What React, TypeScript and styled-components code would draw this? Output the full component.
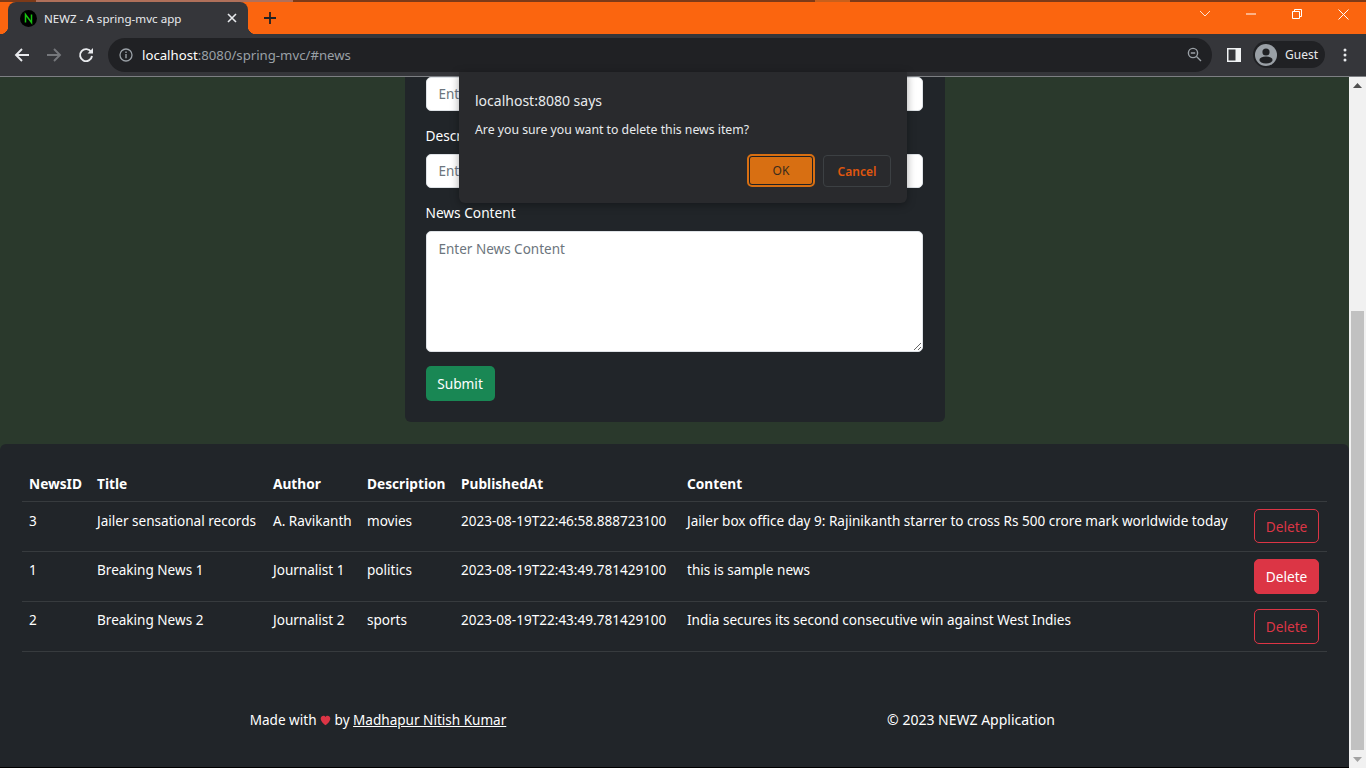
import * as React from 'react'
import styled, { createGlobalStyle } from 'styled-components'

const FONT = '"Noto Sans", "Open Sans", sans-serif'

const GlobalStyle = createGlobalStyle`
    html, body {
        margin: 0;
        padding: 0;
        height: 768px;
        overflow: hidden;
        background: #212529;
        font-family: ${FONT};
    }
    * { box-sizing: border-box; }
`

const Window = styled.div`
    width: 1366px;
    height: 768px;
    display: flex;
    flex-direction: column;
    position: relative;
    overflow: hidden;
`

/* ---- browser chrome ---- */
const TopEdge = styled.div`
    height: 2px;
    background: linear-gradient(to right, #7d3a18 36px, #b0705a 36px, #b0705a 293px, #7d3a18 293px, #7d3a18 815px, #c9601c 815px, #c9601c 850px, #7d3a18 850px);
`
const TabStrip = styled.div`
    height: 32px;
    background: #fb650f;
    display: flex;
    align-items: flex-end;
    padding-left: 8px;
`
const Tab = styled.div`
    position: relative;
    width: 240px;
    height: 32px;
    background: #35363a;
    border-radius: 8px 8px 0 0;
    display: flex;
    align-items: center;
    padding: 0 8px 0 12px;
    color: #e8eaed;
    font-size: 11.6px;
    &::before, &::after {
        content: '';
        position: absolute;
        bottom: 0;
        width: 8px;
        height: 8px;
    }
    &::before {
        left: -8px;
        background: radial-gradient(circle at 0 0, #fb650f 8px, #35363a 8.5px);
    }
    &::after {
        right: -8px;
        background: radial-gradient(circle at 100% 0, #fb650f 8px, #35363a 8.5px);
    }
`
const TabTitle = styled.span`
    flex: 1;
    margin-left: 7px;
`
const NewTab = styled.div`
    width: 24px;
    height: 24px;
    margin: 0 0 4px 10px;
    display: flex;
    align-items: center;
    justify-content: center;
`
const WindowControls = styled.div`
    margin-left: auto;
    align-self: flex-start;
    display: flex;
    align-items: center;
    height: 24px;
`
const WinButton = styled.div`
    width: 46px;
    display: flex;
    justify-content: center;
`
const Toolbar = styled.div`
    height: 43px;
    background: #35363a;
    border-bottom: 1px solid #7d7f83;
    display: flex;
    align-items: center;
    padding: 0 0 1px 6px;
`
const NavButton = styled.div<{ $gap?: number }>`
    width: 32px;
    height: 32px;
    margin-left: ${p => p.$gap || 0}px;
    display: flex;
    align-items: center;
    justify-content: center;
`
const Omnibox = styled.div`
    width: 1104px;
    height: 34px;
    margin-left: 6px;
    background: #202124;
    border-radius: 17px;
    display: flex;
    align-items: center;
    padding: 0 10px 0 11px;
    font-size: 13.2px;
    color: #9aa0a6;
`
const Host = styled.span`
    color: #fff;
    margin-left: 9px;
`
const OmniEnd = styled.div`
    margin-left: auto;
    display: flex;
`
const ProfileChip = styled.div`
    width: 72px;
    height: 27px;
    margin-left: 3px;
    background: #202124;
    border-radius: 14px;
    display: flex;
    align-items: center;
    gap: 8px;
    padding-left: 2px;
    color: #e8eaed;
    font-size: 12px;
`

/* ---- page ---- */
const Viewport = styled.div`
    flex: 1;
    display: flex;
    min-height: 0;
`
const Page = styled.div`
    flex: 1;
    min-width: 0;
    background: #2a392c;
    display: flex;
    flex-direction: column;
`
const FormCard = styled.form`
    width: 540px;
    margin: 0 auto 22px;
    background: #212529;
    border-radius: 0 0 6px 6px;
    padding: 0 22px 21px 21px;
    display: flex;
    flex-direction: column;
`
const FieldLabel = styled.label`
    color: #fff;
    font-size: 13.7px;
    line-height: 24px;
    margin: 13px 0 6px;
`
const TextField = styled.input`
    display: block;
    width: 100%;
    height: 34px;
    border: 1px solid #dee2e6;
    border-radius: 5px;
    background: #fff;
    padding: 0 12px 1px;
    font: 13.5px ${FONT};
    &::placeholder { color: #6c757d; opacity: 1; }
`
const TextArea = styled.textarea`
    display: block;
    width: 100%;
    height: 121px;
    border: 1px solid #dee2e6;
    border-radius: 5px;
    background: #fff;
    padding: 7px 12px;
    font: 13.5px/21px ${FONT};
    &::placeholder { color: #6c757d; opacity: 1; }
`
const SubmitButton = styled.button`
    align-self: flex-start;
    width: 69px;
    height: 35px;
    margin-top: 14px;
    border: 0;
    border-radius: 5px;
    background: #198754;
    color: #fff;
    font: 13.7px ${FONT};
`
const NewsPanel = styled.section`
    flex: 1;
    background: #212529;
    border-radius: 6px 6px 0 0;
    padding: 23px 22px 0;
    border-bottom: 1px solid #000;
`
const NewsTable = styled.table`
    width: 1305px;
    table-layout: fixed;
    border-collapse: collapse;
    color: #fff;
    font-size: 13.55px;
`
const HeadCell = styled.th`
    height: 34px;
    padding: 0 7px;
    text-align: left;
    font-weight: 700;
    font-size: 13.7px;
    border-bottom: 1px solid #373b3e;
    white-space: nowrap;
`
const BodyCell = styled.td`
    height: 50px;
    padding: 0 7px 13px;
    vertical-align: middle;
    border-bottom: 1px solid #373b3e;
    white-space: nowrap;
    tr:first-child > & { padding-bottom: 11px; }
`
const ActionCell = styled.td`
    height: 50px;
    padding: 0 7px;
    vertical-align: middle;
    border-bottom: 1px solid #373b3e;
`
const DeleteButton = styled.button<{ $hover?: boolean }>`
    display: block;
    width: 65px;
    height: 35px;
    border: 1px solid #dc3545;
    border-radius: 5px;
    background: ${p => (p.$hover ? '#dc3545' : 'transparent')};
    color: ${p => (p.$hover ? '#fff' : '#dc3545')};
    font: 13.7px ${FONT};
    padding: 0;
    tr:first-child & { height: 34px; }
`
const Footer = styled.footer`
    width: 1186px;
    margin: 56px auto 0;
    display: grid;
    grid-template-columns: 1fr 1fr;
    color: #fff;
    font-size: 13.55px;
    line-height: 24px;
    text-align: center;
`
const Copyright = styled.div`
    font-size: 14px;
`
const AuthorLink = styled.a`
    color: #fff;
    text-decoration: underline;
`
const Heart = styled.svg`
    vertical-align: -1px;
`

/* ---- scrollbar ---- */
const Scrollbar = styled.div`
    width: 17px;
    background: #f1f1f1;
    display: flex;
    flex-direction: column;
    align-items: center;
`
const ScrollArrow = styled.div`
    height: 17px;
    display: flex;
    align-items: center;
    justify-content: center;
`
const ScrollTrack = styled.div`
    flex: 1;
    width: 100%;
    display: flex;
    flex-direction: column;
    justify-content: flex-end;
`
const ScrollThumb = styled.div`
    height: 439px;
    margin: 0 2px 1px;
    background: #c1c1c1;
`

/* ---- js confirm dialog ---- */
const Dialog = styled.div`
    position: absolute;
    left: 459px;
    top: 72px;
    width: 448px;
    height: 131px;
    background: #292a2d;
    border-radius: 0 0 6px 6px;
    box-shadow: 0 2px 8px rgba(0, 0, 0, 0.35);
    padding: 19px 16px 0;
    color: #e8eaed;
`
const DialogTitle = styled.div`
    font-size: 14px;
    line-height: 20px;
`
const DialogText = styled.div`
    font-size: 12.25px;
    line-height: 18px;
    margin-top: 10px;
`
const DialogActions = styled.div`
    display: flex;
    justify-content: flex-end;
    gap: 8px;
    margin-top: 15px;
`
const OkButton = styled.button`
    width: 64px;
    height: 29px;
    margin: 2px;
    padding: 0;
    border-radius: 3px;
    border: 1px solid #202124;
    outline: 2px solid #d86f12;
    background: #d86f12;
    color: #3a2c1c;
    font: 12px ${FONT};
`
const CancelButton = styled.button`
    width: 68px;
    height: 32px;
    align-self: flex-end;
    padding: 0;
    border-radius: 4px;
    border: 1px solid #3c4043;
    background: transparent;
    color: #e0570e;
    font: 600 12px ${FONT};
`

const rows = [
    { id: 3, title: 'Jailer sensational records', author: 'A. Ravikanth', desc: 'movies', at: '2023-08-19T22:46:58.888723100', content: 'Jailer box office day 9: Rajinikanth starrer to cross Rs 500 crore mark worldwide today' },
    { id: 1, title: 'Breaking News 1', author: 'Journalist 1', desc: 'politics', at: '2023-08-19T22:43:49.781429100', content: 'this is sample news', hover: true },
    { id: 2, title: 'Breaking News 2', author: 'Journalist 2', desc: 'sports', at: '2023-08-19T22:43:49.781429100', content: 'India secures its second consecutive win against West Indies' },
]

const colWidths = [68, 176, 94, 94, 226, 567, 80]

const App = () => (
    <Window>
        <GlobalStyle />
        <TopEdge />
        <TabStrip>
            <Tab>
                <svg width="17" height="17" viewBox="0 0 17 17">
                    <circle cx="8.5" cy="8.5" r="8.5" fill="#000" />
                    <path d="M5.5 12.5v-8l6 8v-8" fill="none" stroke="#17c20f" strokeWidth="1.5" />
                </svg>
                <TabTitle>NEWZ - A spring-mvc app</TabTitle>
                <svg width="16" height="16" viewBox="0 0 16 16">
                    <path d="M4 4l8 8M12 4l-8 8" stroke="#e8eaed" strokeWidth="1.6" />
                </svg>
            </Tab>
            <NewTab>
                <svg width="14" height="14" viewBox="0 0 14 14">
                    <path d="M7 1v12M1 7h12" stroke="#202124" strokeWidth="1.8" />
                </svg>
            </NewTab>
            <WindowControls>
                <WinButton>
                    <svg width="12" height="8" viewBox="0 0 12 8">
                        <path d="M1 1l5 5 5-5" fill="none" stroke="#fde3d3" strokeWidth="1" />
                    </svg>
                </WinButton>
                <WinButton>
                    <svg width="10" height="2" viewBox="0 0 10 2">
                        <path d="M0 1h10" stroke="#fff" strokeWidth="1" />
                    </svg>
                </WinButton>
                <WinButton>
                    <svg width="10" height="10" viewBox="0 0 10 10">
                        <path d="M.5 2.5h7v7h-7zM2.5 2.5v-2h7v7h-2" fill="none" stroke="#fff" strokeWidth="1" />
                    </svg>
                </WinButton>
                <WinButton>
                    <svg width="11" height="11" viewBox="0 0 11 11">
                        <path d="M.5.5l10 10M10.5.5l-10 10" stroke="#fff" strokeWidth="1" />
                    </svg>
                </WinButton>
            </WindowControls>
        </TabStrip>
        <Toolbar>
            <NavButton>
                <svg width="16" height="16" viewBox="0 0 16 16">
                    <path d="M15 8H2M8 2L2 8l6 6" fill="none" stroke="#e8eaed" strokeWidth="1.9" />
                </svg>
            </NavButton>
            <NavButton>
                <svg width="16" height="16" viewBox="0 0 16 16">
                    <path d="M1 8h13M8 2l6 6-6 6" fill="none" stroke="#75777b" strokeWidth="1.9" />
                </svg>
            </NavButton>
            <NavButton>
                <svg width="16" height="16" viewBox="0 0 16 16">
                    <path d="M13.2 5A6 6 0 1 0 14 9" fill="none" stroke="#e8eaed" strokeWidth="1.9" />
                    <path d="M9.5 6.5H15V1z" fill="#e8eaed" />
                </svg>
            </NavButton>
            <Omnibox>
                <svg width="14" height="14" viewBox="0 0 14 14">
                    <circle cx="7" cy="7" r="6" fill="none" stroke="#9aa0a6" strokeWidth="1.3" />
                    <path d="M7 6v4.2M7 3.6v1.4" stroke="#9aa0a6" strokeWidth="1.4" />
                </svg>
                <Host>localhost</Host>:8080/spring-mvc/#news
                <OmniEnd>
                    <svg width="15" height="15" viewBox="0 0 15 15">
                        <circle cx="6" cy="6" r="4.6" fill="none" stroke="#9aa0a6" strokeWidth="1.4" />
                        <path d="M3.8 6h4.4M9.5 9.5l4.5 4.5" stroke="#9aa0a6" strokeWidth="1.4" />
                    </svg>
                </OmniEnd>
            </Omnibox>
            <NavButton $gap={6}>
                <svg width="14" height="14" viewBox="0 0 14 14">
                    <path fillRule="evenodd" d="M0 0h14v14H0zM1.5 1.5v11h7v-11z" fill="#f1f3f4" />
                </svg>
            </NavButton>
            <ProfileChip>
                <svg width="22" height="22" viewBox="0 0 22 22">
                    <circle cx="11" cy="11" r="11" fill="#9aa0a6" />
                    <circle cx="11" cy="8" r="3.6" fill="#202124" />
                    <ellipse cx="11" cy="16" rx="6.6" ry="3.4" fill="#202124" />
                </svg>
                Guest
            </ProfileChip>
            <NavButton $gap={4}>
                <svg width="4" height="14" viewBox="0 0 4 14">
                    <circle cx="2" cy="2" r="1.5" fill="#e8eaed" />
                    <circle cx="2" cy="7" r="1.5" fill="#e8eaed" />
                    <circle cx="2" cy="12" r="1.5" fill="#e8eaed" />
                </svg>
            </NavButton>
        </Toolbar>
        <Viewport>
            <Page>
                <FormCard>
                    <TextField readOnly placeholder="Enter News Title" />
                    <FieldLabel>Description</FieldLabel>
                    <TextField readOnly placeholder="Enter News Description" />
                    <FieldLabel>News Content</FieldLabel>
                    <TextArea readOnly placeholder="Enter News Content" />
                    <SubmitButton type="button">Submit</SubmitButton>
                </FormCard>
                <NewsPanel>
                    <NewsTable>
                        <colgroup>
                            {colWidths.map((w, i) => <col key={i} width={w} />)}
                        </colgroup>
                        <thead>
                            <tr>
                                <HeadCell>NewsID</HeadCell>
                                <HeadCell>Title</HeadCell>
                                <HeadCell>Author</HeadCell>
                                <HeadCell>Description</HeadCell>
                                <HeadCell>PublishedAt</HeadCell>
                                <HeadCell>Content</HeadCell>
                                <HeadCell />
                            </tr>
                        </thead>
                        <tbody>
                            {rows.map(r => (
                                <tr key={r.id}>
                                    <BodyCell>{r.id}</BodyCell>
                                    <BodyCell>{r.title}</BodyCell>
                                    <BodyCell>{r.author}</BodyCell>
                                    <BodyCell>{r.desc}</BodyCell>
                                    <BodyCell>{r.at}</BodyCell>
                                    <BodyCell>{r.content}</BodyCell>
                                    <ActionCell>
                                        <DeleteButton $hover={r.hover}>Delete</DeleteButton>
                                    </ActionCell>
                                </tr>
                            ))}
                        </tbody>
                    </NewsTable>
                    <Footer>
                        <div>
                            Made with{' '}
                            <Heart width="11" height="11" viewBox="0 0 16 16">
                                <path d="M8 15S1 10.5 1 5.2C1 2.6 3 1 5 1c1.4 0 2.4.7 3 1.8C8.6 1.7 9.6 1 11 1c2 0 4 1.6 4 4.2C15 10.5 8 15 8 15z" fill="#dc3545" />
                            </Heart>{' '}
                            by <AuthorLink href="#">Madhapur Nitish Kumar</AuthorLink>
                        </div>
                        <Copyright>© 2023 NEWZ Application</Copyright>
                    </Footer>
                </NewsPanel>
            </Page>
            <Scrollbar>
                <ScrollArrow>
                    <svg width="9" height="5" viewBox="0 0 9 5"><path d="M4.5 0L9 5H0z" fill="#505050" /></svg>
                </ScrollArrow>
                <ScrollTrack>
                    <ScrollThumb />
                </ScrollTrack>
                <ScrollArrow>
                    <svg width="9" height="5" viewBox="0 0 9 5"><path d="M4.5 5L0 0h9z" fill="#a3a3a3" /></svg>
                </ScrollArrow>
            </Scrollbar>
        </Viewport>
        <Dialog>
            <DialogTitle>localhost:8080 says</DialogTitle>
            <DialogText>Are you sure you want to delete this news item?</DialogText>
            <DialogActions>
                <OkButton>OK</OkButton>
                <CancelButton>Cancel</CancelButton>
            </DialogActions>
        </Dialog>
    </Window>
)

export default App
